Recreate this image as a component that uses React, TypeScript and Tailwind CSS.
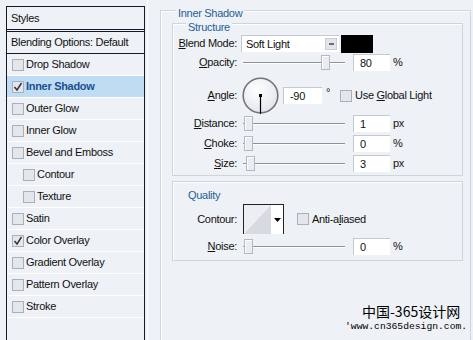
import React from "react";

const LINE = "border-[#161a26]";

function Check({ checked = false }: { checked?: boolean }) {
  return (
    <span className="w-[12px] h-[12px] shrink-0 border border-[#aab0b9] bg-[#e3e6eb] flex items-center justify-center">
      {checked && (
        <svg width="10" height="10" viewBox="0 0 10 10">
          <path d="M1.5 5 L4 8 L8.5 1" stroke="#2b2f3a" strokeWidth="1.4" fill="none" />
        </svg>
      )}
    </span>
  );
}

const styleRows: { label: string; checked?: boolean; active?: boolean; indent?: boolean }[] = [
  { label: "Drop Shadow" },
  { label: "Inner Shadow", checked: true, active: true },
  { label: "Outer Glow" },
  { label: "Inner Glow" },
  { label: "Bevel and Emboss" },
  { label: "Contour", indent: true },
  { label: "Texture", indent: true },
  { label: "Satin" },
  { label: "Color Overlay", checked: true },
  { label: "Gradient Overlay" },
  { label: "Pattern Overlay" },
  { label: "Stroke" },
];

function StylesPanel() {
  return (
    <div className={`ml-[6px] mt-[6px] w-[139px] h-[340px] shrink-0 border ${LINE} bg-[#eef1f5]`}>
      <div className="h-[22px] pl-[4px] flex items-center">Styles</div>
      <div className={`h-[3px] border-y ${LINE}`} />
      <div className={`h-[22px] pl-[4px] flex items-center border-b ${LINE}`}>Blending Options: Default</div>
      {styleRows.map((r) => (
        <div
          key={r.label}
          className={`h-[22px] flex items-center gap-[2px] border-b border-white ${r.indent ? "pl-[16px]" : "pl-[5px]"} ${
            r.active ? "bg-[#bfdcf3] font-bold text-[#1d4f91]" : ""
          }`}
        >
          <Check checked={r.checked} />
          <span>{r.label}</span>
        </div>
      ))}
    </div>
  );
}

function Label({ children }: { children: React.ReactNode }) {
  return <div className="w-[64px] shrink-0 text-right">{children}</div>;
}

function Slider({ at }: { at: number }) {
  return (
    <div className="ml-[6px] w-[102px] h-[17px] relative shrink-0">
      <div className="absolute left-0 right-0 top-[8px] h-[1px] bg-[#8d939c]" />
      <div className="absolute left-0 right-0 top-[9px] h-[1px] bg-white" />
      <div
        className="absolute top-[1px] w-[9px] h-[15px] border border-[#b4b9c1] bg-[#e9ecf0] shadow-[inset_1px_1px_0_#fff]"
        style={{ left: at }}
      />
    </div>
  );
}

function Field({ value, w = "w-[37px]" }: { value: string; w?: string }) {
  return (
    <div className={`${w} h-[17px] shrink-0 bg-white border-t border-l border-[#c4c9d1] pl-[6px] flex items-center`}>
      {value}
    </div>
  );
}

function SliderRow({ label, at, value, unit }: { label: React.ReactNode; at: number; value: string; unit: string }) {
  return (
    <div className="h-[17px] flex items-center">
      <Label>{label}</Label>
      <Slider at={at} />
      <div className="ml-[8px]">
        <Field value={value} />
      </div>
      <span className="ml-[3px]">{unit}</span>
    </div>
  );
}

function Group({ className, children }: { className: string; children: React.ReactNode }) {
  return (
    <div className={`relative border border-[#d0d5dc] shadow-[inset_1px_1px_0_#fff] ${className}`}>{children}</div>
  );
}

function Dial() {
  return (
    <svg width="37" height="37" viewBox="0 0 37 37" className="ml-[5px] shrink-0">
      <defs>
        <radialGradient id="dg" cx="0.4" cy="0.35" r="0.7">
          <stop offset="0" stopColor="#ffffff" />
          <stop offset="1" stopColor="#e1e5eb" />
        </radialGradient>
      </defs>
      <circle cx="18.5" cy="18.5" r="17.3" fill="url(#dg)" stroke="#6f747d" strokeWidth="1.6" />
      <line x1="18.5" y1="18.5" x2="18.5" y2="37" stroke="#000" strokeWidth="1.2" />
      <rect x="17" y="17" width="3" height="3" fill="#000" />
    </svg>
  );
}

export default function App() {
  return (
    <div className="w-[473px] h-[340px] overflow-hidden relative flex bg-[#eef1f5] text-[11px] leading-[13px] tracking-[-0.3px] text-[#111] font-['Liberation_Sans',Arial,sans-serif]">
      <StylesPanel />

      <div className="ml-[2px] w-px h-[340px] bg-white shrink-0" />

      <div className="ml-[12px] mt-[10px] w-[311px] h-[340px] shrink-0 relative border-l border-t border-r border-[#d0d5dc] shadow-[inset_1px_1px_0_#fff]">
        <span className="absolute left-[15px] top-[-4px] px-[2px] bg-[#eef1f5] text-[#1f5f98]">Inner Shadow</span>

        <Group className="ml-[11px] mt-[12px] w-[291px] h-[153px] pt-[11px]">
          <span className="absolute left-[13px] top-[-3px] px-[2px] bg-[#eef1f5] text-[#1f5f98]">Structure</span>
          <div className="h-[17px] flex items-center">
            <Label>
              <u>B</u>lend Mode:
            </Label>
            <div className="ml-[4px] w-[98px] h-[17px] bg-white border-t border-l border-[#c4c9d1] pl-[4px] flex items-center justify-between">
              <span>Soft Light</span>
              <span className="mr-[2px] w-[12px] h-[12px] bg-[#e2e5ea] border border-[#c9cdd4] flex items-center justify-center">
                <span className="w-[5px] h-[2px] bg-[#6a6f78]" />
              </span>
            </div>
            <div className="ml-[2px] w-[32px] h-[18px] bg-black" />
          </div>

          <div className="mt-[2px]">
            <SliderRow label={<><u>O</u>pacity:</>} at={78} value="80" unit="%" />
          </div>

          <div className="mt-[6px] h-[37px] flex items-center">
            <Label>
              <u>A</u>ngle:
            </Label>
            <Dial />
            <div className="ml-[4px]">
              <Field value="-90" w="w-[39px]" />
            </div>
            <span className="ml-[4px] -mt-[6px]">°</span>
            <div className="ml-[10px] flex items-center gap-[3px]">
              <Check />
              <span>
                Use <u>G</u>lobal Light
              </span>
            </div>
          </div>

          <div className="mt-[1px]">
            <SliderRow label={<><u>D</u>istance:</>} at={1} value="1" unit="px" />
          </div>
          <div className="mt-[3px]">
            <SliderRow label={<><u>C</u>hoke:</>} at={1} value="0" unit="%" />
          </div>
          <div className="mt-[3px]">
            <SliderRow label={<><u>S</u>ize:</>} at={3} value="3" unit="px" />
          </div>
        </Group>

        <Group className="ml-[11px] mt-[5px] w-[291px] h-[80px] pt-[22px]">
          <span className="absolute left-[15px] top-[7px] text-[#1f5f98]">Quality</span>
          <div className="h-[30px] flex items-center">
            <Label>Contour:</Label>
            <div className="ml-[6px] w-[41px] h-[30px] border-t border-l border-r border-[#222] bg-white flex shrink-0">
              <svg width="27" height="29" viewBox="0 0 27 29">
                <rect width="27" height="29" fill="#eceef2" />
                <polygon points="0,29 27,0 27,29" fill="#d7dbe1" />
              </svg>
              <div className="flex-1 flex items-center justify-center">
                <svg width="7" height="4" viewBox="0 0 7 4">
                  <polygon points="0,0 7,0 3.5,4" fill="#000" />
                </svg>
              </div>
            </div>
            <div className="ml-[13px] flex items-center gap-[3px]">
              <Check />
              <span>
                Anti-a<u>l</u>iased
              </span>
            </div>
          </div>
          <div className="mt-[4px]">
            <SliderRow label={<><u>N</u>oise:</>} at={1} value="0" unit="%" />
          </div>
        </Group>
      </div>

      <div className="absolute left-[362px] top-[303px] text-[14px] leading-[17px] tracking-normal text-black font-['Noto_Sans_CJK_SC',sans-serif]">
        中国-365设计网
      </div>
      <div className="absolute left-[345px] top-[321px] text-[9.7px] leading-[12px] tracking-normal text-black font-['Liberation_Mono',monospace]">
        'www.cn365design.com.
      </div>
    </div>
  );
}
